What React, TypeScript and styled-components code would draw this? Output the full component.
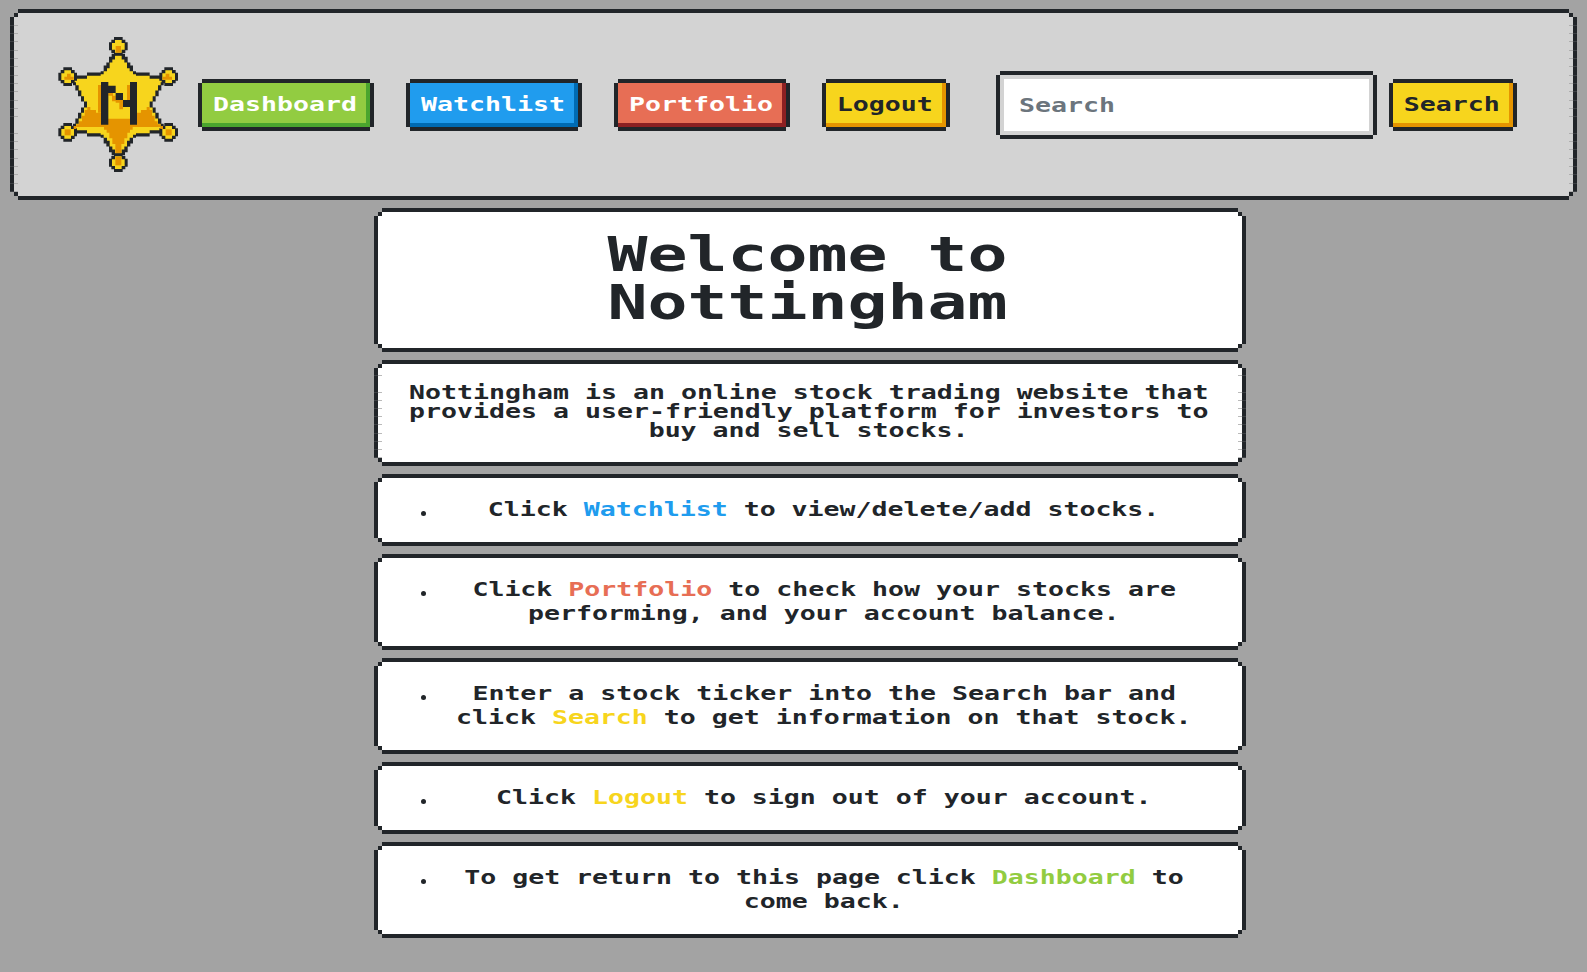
import React from 'react';
import styled, { createGlobalStyle } from 'styled-components';

const INK = '#212529';
const STRETCH = 1.384;
const MONO = '"DejaVu Sans Mono", "Liberation Mono", monospace';

const GlobalStyle = createGlobalStyle`
  * { box-sizing: border-box; }
  body {
    margin: 0;
    background: #a3a3a3;
    color: ${INK};
    font-family: ${MONO};
    font-size: 19.2px;
    font-weight: 700;
  }
`;

const Page = styled.div`
  height: 972px;
  padding: 9px 10px 0;
  display: flex;
  flex-direction: column;
  gap: 8px;
  overflow: hidden;
`;

/* Pixel-stepped rounded frame: 4px ink border with one notch per corner. */
const Frame = styled.div<{ $fill: string }>`
  position: relative;
  background:
    linear-gradient(${p => p.$fill} 0 0) center / calc(100% - 8px) calc(100% - 16px) no-repeat,
    linear-gradient(${p => p.$fill} 0 0) center / calc(100% - 16px) calc(100% - 8px) no-repeat,
    linear-gradient(${INK} 0 0) center / 100% calc(100% - 16px) no-repeat,
    linear-gradient(${INK} 0 0) center / calc(100% - 8px) calc(100% - 8px) no-repeat,
    linear-gradient(${INK} 0 0) center / calc(100% - 16px) 100% no-repeat;
`;

const HeaderBar = styled(Frame).attrs({ as: 'header' })`
  height: 191px;
  padding: 0 64px 0 48px;
  display: flex;
  align-items: flex-start;
`;

const Badge = styled.svg`
  width: 140px;
  height: 150px;
  margin: 21px 0 0 -10px;
  flex: none;
`;

const Nav = styled.nav`
  display: flex;
  gap: 40px;
  margin: 74px 0 0 14px;
`;

const PixelButton = styled.button<{ $bg: string; $shade: string; $ink?: string; $chars: number }>`
  flex: none;
  width: ${p => p.$chars * 16 + 24}px;
  height: 44px;
  padding: 0 2px 0 0;
  border: 0;
  display: flex;
  align-items: center;
  justify-content: center;
  font: 700 19.2px/24px ${MONO};
  color: ${p => p.$ink ?? '#fff'};
  background: ${p => p.$bg};
  box-shadow:
    inset -4px -4px ${p => p.$shade},
    0 -4px ${INK}, 0 4px ${INK}, -4px 0 ${INK}, 4px 0 ${INK};
`;

const Wide = styled.span`
  display: block;
  white-space: pre;
  transform: scaleX(${STRETCH});
`;

const SearchForm = styled.div`
  display: flex;
  gap: 20px;
  align-items: center;
  margin: 66px 0 0 54px;
`;

const Field = styled.label`
  width: 373px;
  height: 60px;
  border: 4px solid #d3d3d3;
  background: #fff;
  padding: 0 0 0 15px;
  display: flex;
  align-items: center;
  overflow: visible;
  box-shadow: 0 -4px ${INK}, 0 4px ${INK}, -4px 0 ${INK}, 4px 0 ${INK};
`;

const Input = styled.input`
  width: 240px;
  height: 40px;
  padding: 0;
  border: 0;
  outline: 0;
  background: transparent;
  font: 700 19.2px/24px ${MONO};
  color: ${INK};
  transform: scaleX(${STRETCH});
  transform-origin: left;
  &::placeholder { color: #6c757d; opacity: 1; }
`;

const Column = styled.main`
  width: 872px;
  margin-left: 364px;
  display: flex;
  flex-direction: column;
  gap: 8px;
`;

const Card = styled(Frame)<{ $h: number }>`
  height: ${p => p.$h}px;
  padding-top: 23px;
  display: flex;
  flex-direction: column;
  align-items: center;
`;

const Title = styled.h1`
  margin: -1px 0 0 -6px;
  font-size: 48px;
  line-height: 48px;
`;

const Intro = styled.div`
  margin: 0 0 0 -3px;
  line-height: 19px;
  display: flex;
  flex-direction: column;
  align-items: center;
`;

const Item = styled(Card)`
  padding-top: 24px;
  padding-left: 28px;
  line-height: 24px;
`;

const Bullet = styled.i`
  position: absolute;
  left: 47px;
  top: 37px;
  width: 5px;
  height: 5px;
  border-radius: 50%;
  background: ${INK};
`;

const Tint = styled.span<{ $c: string }>`
  color: ${p => p.$c};
`;

const Seams = styled.svg<{ $right?: boolean }>`
  position: absolute;
  top: 0;
  ${p => (p.$right ? 'right: 0; transform: scaleX(-1);' : 'left: 0;')}
  width: 8px;
  height: 100%;
`;

/* Hairline seams across the side borders: faint on ink, grey on the fill. */
function SeamPair({ rows }: { rows: number[] }) {
  const lines = rows.map(y => (
    <g key={y} fill="#a3a3a3">
      <rect x="0" y={y} width="4" height="1" fillOpacity="0.22" />
      <rect x="4" y={y} width="4" height="1" fillOpacity="0.75" />
    </g>
  ));
  return (
    <>
      <Seams shapeRendering="crispEdges">{lines}</Seams>
      <Seams $right shapeRendering="crispEdges">{lines}</Seams>
    </>
  );
}

const CX = 211;
const CY = 223.5;

/* Mirrors one quadrant of a stepped outline into a full closed polygon. */
function mirror(q: number[][]) {
  const r = [...q].reverse();
  return [
    ...q.map(([x, y]) => [CX + x, CY - y]),
    ...r.map(([x, y]) => [CX + x, CY + y]),
    ...q.map(([x, y]) => [CX - x, CY + y]),
    ...r.map(([x, y]) => [CX - x, CY - y]),
  ].map(p => p.join(',')).join(' ');
}

const OUTER = [[20, 152], [20, 143], [28, 143], [28, 126], [36, 126], [36, 117], [44, 117], [44, 100], [53, 100], [53, 96], [94, 96], [94, 87], [136, 87], [136, 58], [129, 58], [129, 42], [121, 42], [121, 25], [112, 25], [112, 9], [103, 9], [103, 0]];
const INNER = [[10, 148], [10, 135], [18, 135], [18, 126], [26, 126], [26, 109], [34, 109], [34, 100], [44, 100], [44, 91], [53, 91], [53, 86], [94, 86], [94, 77], [134, 77], [134, 67], [127, 67], [127, 58], [119, 58], [119, 42], [111, 42], [111, 25], [103, 25], [103, 9], [94, 9], [94, 0]];

function Ball({ x, y, children }: { x: number; y: number; children: React.ReactNode }) {
  return (
    <g transform={`translate(${x} ${y})`}>
      <path fill={INK} d="M-13-28H13V-20H21V-12H28V12H21V20H13V28H-13V20H-21V12H-28V-12H-21V-20H-13Z" />
      <path fill="#f7d51d" d="M-10-19H10V-10H19V10H10V19H-10V10H-19V-10H-10Z" />
      <g fill="#e59400">{children}</g>
    </g>
  );
}

function StarBadge() {
  return (
    <Badge viewBox="0 0 420 450">
      <polygon fill={INK} points={mirror(OUTER)} />
      <polygon fill="#f7d51d" points={mirror(INNER)} />
      <path
        fill="#e59400"
        d="M118 231H127V240H144V248H159V266H246V248H279V240H296V231H305V240H312V257H320V274H329V283H337V291H300V291H254V299H246V308H238V325H229V342H220V370H202V342H193V325H184V308H176V299H168V291H85V283H93V274H102V257H110V240H118Z"
      />
      <path fill="#e59400" d="M150 165H159V248H150ZM181 189H195V197H203V210H225V238H214V218H203V214H192V197H181ZM237 165H246V210H237Z" />
      <path fill={INK} d="M159 156H181V167H203V189H225V210H246V156H267V284H246V231H225V210H203V189H181V284H159Z" />
      <Ball x={211} y={49}><path d="M-8-1H8V8H8V19H-8V8H-8Z" /></Ball>
      <Ball x={59} y={140}><path d="M-2-9H9V0H18V9H-10V0H-2Z" /></Ball>
      <Ball x={362} y={140}><path d="M2-9H-9V0H-18V9H10V0H2Z" /></Ball>
      <Ball x={59} y={307}><path d="M-9-9H9V9H-9Z" /></Ball>
      <Ball x={362} y={307}><path d="M-9-9H9V9H-9Z" /></Ball>
      <Ball x={211} y={398}><path d="M-9-18H9V8H-9Z" /></Ball>
      <path fill="#e59400" d="M77 288H85V297H77ZM337 288H345V297H337Z" />
    </Badge>
  );
}

const BLUE = '#209cee';
const RED = '#e76e55';
const YELLOW = '#f7d51d';
const GREEN = '#92cc41';

export default function App() {
  return (
    <Page>
      <GlobalStyle />
      <HeaderBar $fill="#d3d3d3">
        <SeamPair rows={[16, 24, 32, 41, 49, 57, 66, 74, 82, 91, 99, 107, 124, 132, 140, 149, 157, 165, 174, 182]} />
        <StarBadge />
        <Nav>
          <PixelButton $bg={GREEN} $shade="#4aa52e" $chars={9}><Wide>Dashboard</Wide></PixelButton>
          <PixelButton $bg={BLUE} $shade="#006bb3" $chars={9}><Wide>Watchlist</Wide></PixelButton>
          <PixelButton $bg={RED} $shade="#8c2022" $chars={9}><Wide>Portfolio</Wide></PixelButton>
          <PixelButton $bg={YELLOW} $shade="#e59400" $ink={INK} $chars={6}><Wide>Logout</Wide></PixelButton>
        </Nav>
        <SearchForm>
          <Field><Input placeholder="Search" /></Field>
          <PixelButton $bg={YELLOW} $shade="#e59400" $ink={INK} $chars={6}><Wide>Search</Wide></PixelButton>
        </SearchForm>
      </HeaderBar>
      <Column>
        <Card $fill="#fff" $h={144}>
          <Title>
            <Wide>Welcome to</Wide>
            <Wide>Nottingham</Wide>
          </Title>
        </Card>
        <Card $fill="#fff" $h={106}>
          <SeamPair rows={[15, 32, 40, 48, 56, 64, 73, 81, 89, 97]} />
          <Intro>
            <Wide>Nottingham is an online stock trading website that</Wide>
            <Wide>provides a user-friendly platform for investors to</Wide>
            <Wide>buy and sell stocks.</Wide>
          </Intro>
        </Card>
        <Item $fill="#fff" $h={72}>
          <Bullet />
          <Wide>Click <Tint $c={BLUE}>Watchlist</Tint> to view/delete/add stocks.</Wide>
        </Item>
        <Item $fill="#fff" $h={96}>
          <Bullet />
          <Wide>Click <Tint $c={RED}>Portfolio</Tint> to check how your stocks are</Wide>
          <Wide>performing, and your account balance.</Wide>
        </Item>
        <Item $fill="#fff" $h={96}>
          <Bullet />
          <Wide>Enter a stock ticker into the Search bar and</Wide>
          <Wide>click <Tint $c={YELLOW}>Search</Tint> to get information on that stock.</Wide>
        </Item>
        <Item $fill="#fff" $h={72}>
          <Bullet />
          <Wide>Click <Tint $c={YELLOW}>Logout</Tint> to sign out of your account.</Wide>
        </Item>
        <Item $fill="#fff" $h={96}>
          <Bullet />
          <Wide>To get return to this page click <Tint $c={GREEN}>Dashboard</Tint> to</Wide>
          <Wide>come back.</Wide>
        </Item>
      </Column>
    </Page>
  );
}
